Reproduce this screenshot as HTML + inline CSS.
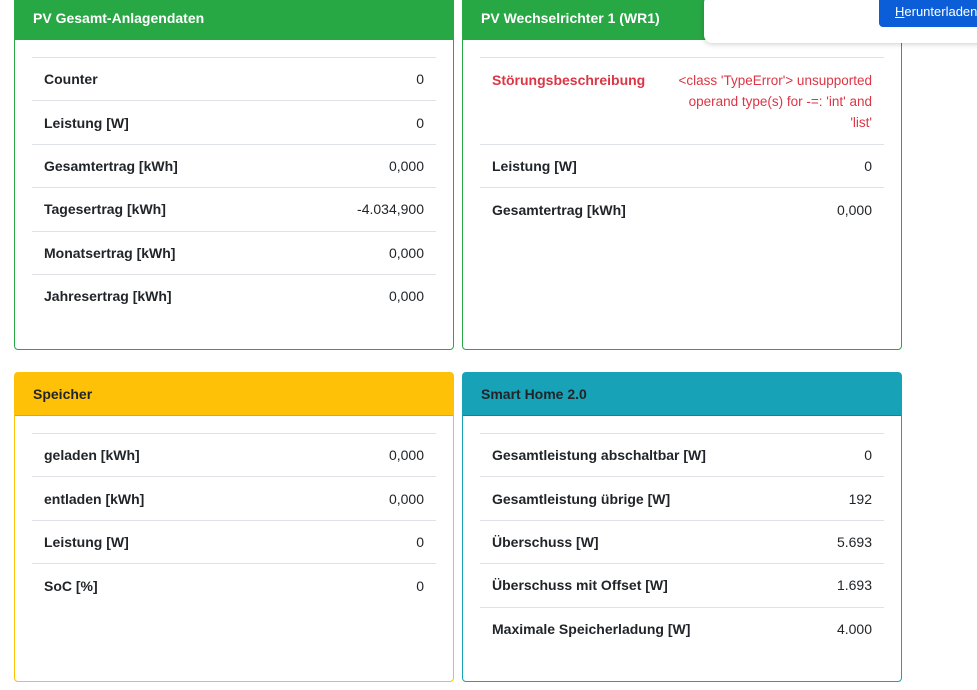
<!DOCTYPE html>
<html><head><meta charset="utf-8">
<style>
*{box-sizing:border-box;margin:0;padding:0}
body{width:977px;height:690px;background:#fff;font-family:"Liberation Sans",sans-serif;font-size:14px;color:#212529;position:relative;overflow:hidden}
.card{position:absolute;width:440px;border:1px solid;border-radius:4px;background:#fff}
.hd{height:43px;padding:0 18px;line-height:43px;font-weight:bold;font-size:14px;border-bottom:1px solid}
.bd{padding:17px 17px 0}
table{width:100%;border-collapse:collapse}
td{border-top:1px solid #dee2e6;height:43.4px;padding:0 12px;vertical-align:middle}
td:first-child{font-weight:bold}
td:last-child{text-align:right}
.g{border-color:#28a745}.g .hd{background:#28a745;color:#fff;border-color:#28a745}
.y{border-color:#ffc107}.y .hd{background:#ffc107;border-color:#e0a800}
.t{border-color:#17a2b8}.t .hd{background:#17a2b8;border-color:#138496}
.red td{color:#dc3545;line-height:21px;padding-top:12px;padding-bottom:11px;vertical-align:top;height:86px}
.err{width:197px;margin-left:auto;font-size:13.5px}
.pop{position:absolute;left:704px;top:-5px;width:290px;height:48px;background:#fff;border-radius:8px;box-shadow:0 1px 6px rgba(0,0,0,.2)}
.btn{position:absolute;left:879px;top:-4px;width:110px;height:31px;background:#0b5ed7;color:#fff;border-radius:4px;padding:8px 0 0 16px;font-size:13px}
</style></head><body>
<div class="card g" style="left:14px;top:-4px;height:354px">
<div class="hd">PV Gesamt-Anlagendaten</div>
<div class="bd"><table>
<tr><td>Counter</td><td>0</td></tr>
<tr><td>Leistung [W]</td><td>0</td></tr>
<tr><td>Gesamtertrag [kWh]</td><td>0,000</td></tr>
<tr><td>Tagesertrag [kWh]</td><td>-4.034,900</td></tr>
<tr><td>Monatsertrag [kWh]</td><td>0,000</td></tr>
<tr><td>Jahresertrag [kWh]</td><td>0,000</td></tr>
</table></div></div>
<div class="card g" style="left:462px;top:-4px;height:354px">
<div class="hd">PV Wechselrichter 1 (WR1)</div>
<div class="bd"><table>
<tr class="red"><td>Störungsbeschreibung</td><td><div class="err">&lt;class 'TypeError'&gt; unsupported operand type(s) for -=: 'int' and 'list'</div></td></tr>
<tr><td>Leistung [W]</td><td>0</td></tr>
<tr><td>Gesamtertrag [kWh]</td><td>0,000</td></tr>
</table></div></div>
<div class="card y" style="left:14px;top:372px;height:310px">
<div class="hd">Speicher</div>
<div class="bd"><table>
<tr><td>geladen [kWh]</td><td>0,000</td></tr>
<tr><td>entladen [kWh]</td><td>0,000</td></tr>
<tr><td>Leistung [W]</td><td>0</td></tr>
<tr><td>SoC [%]</td><td>0</td></tr>
</table></div></div>
<div class="card t" style="left:462px;top:372px;height:310px">
<div class="hd">Smart Home 2.0</div>
<div class="bd"><table>
<tr><td>Gesamtleistung abschaltbar [W]</td><td>0</td></tr>
<tr><td>Gesamtleistung übrige [W]</td><td>192</td></tr>
<tr><td>Überschuss [W]</td><td>5.693</td></tr>
<tr><td>Überschuss mit Offset [W]</td><td>1.693</td></tr>
<tr><td>Maximale Speicherladung [W]</td><td>4.000</td></tr>
</table></div></div>
<div class="pop"></div>
<div class="btn"><u>H</u>erunterladen</div>
</body></html>
